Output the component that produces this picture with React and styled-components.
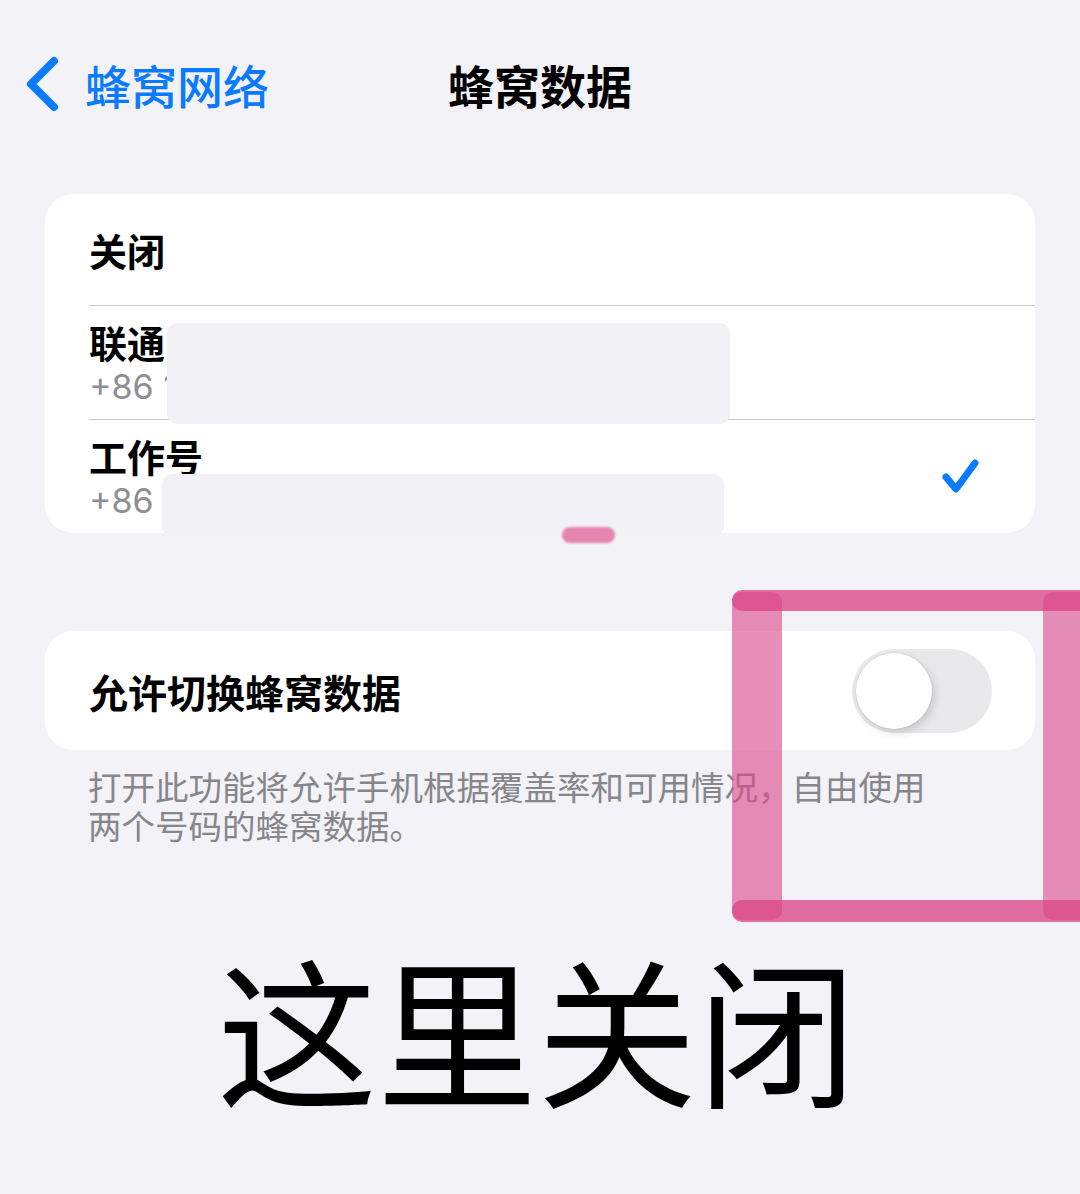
import React from "react";
import styled, { createGlobalStyle } from "styled-components";

const GlobalStyle = createGlobalStyle`
  * { box-sizing: border-box; }
  body {
    margin: 0;
    background: #f2f2f7;
    font-family: "Inter", "Noto Sans CJK SC", sans-serif;
    -webkit-font-smoothing: antialiased;
  }
`;

const Page = styled.div`
  position: relative;
  width: 1080px;
  height: 1194px;
  overflow: hidden;
  background: #f2f2f7;
`;

const NavBar = styled.div`
  display: grid;
  grid-template-columns: 1fr auto 1fr;
  align-items: center;
  height: 168px;
  padding: 0 25px;
`;

const BackButton = styled.div`
  display: flex;
  align-items: center;
  gap: 26px;
  color: #0a7aff;
  font-family: "Noto Sans CJK SC", sans-serif;
  font-size: 46px;
  font-weight: 500;
`;

const Title = styled.div`
  font-family: "Noto Sans CJK SC", sans-serif;
  font-size: 46px;
  font-weight: 700;
  color: #000;
`;

const Card = styled.div`
  position: relative;
  margin: ${(p) => p.$top || 0}px 45px 0;
  background: #fff;
  border-radius: 28px;
`;

const Row = styled.div`
  display: flex;
  padding-left: 44px;
`;

const RowInner = styled.div`
  flex: 1;
  display: flex;
  align-items: center;
  justify-content: space-between;
  min-height: ${(p) => p.$h || 112}px;
  padding-right: ${(p) => p.$pr || 55}px;
  border-bottom: ${(p) => (p.$sep ? "1.5px solid #c8c8cc" : "none")};
`;

const Label = styled.div`
  display: flex;
  flex-direction: column;
  gap: 4px;
  padding-top: 2px;
`;

const RowTitle = styled.div`
  font-family: "Noto Sans CJK SC", sans-serif;
  font-size: ${(p) => p.$size || 38}px;
  font-weight: 600;
  line-height: 42px;
  color: #000;
`;

const RowSub = styled.div`
  font-family: "Inter", "Noto Sans CJK SC", sans-serif;
  font-size: 34px;
  line-height: 40px;
  color: #8e8e93;
`;

const Mask = styled.div`
  position: absolute;
  left: ${(p) => p.$x}px;
  top: ${(p) => p.$y}px;
  width: ${(p) => p.$w}px;
  height: ${(p) => p.$h}px;
  background: #f1f1f6;
  border-radius: 10px;
`;

const Smudge = styled.div`
  position: absolute;
  left: 517px;
  top: 333px;
  width: 53px;
  height: 16px;
  border-radius: 8px;
  background: rgba(224, 96, 148, 0.75);
  filter: blur(1px);
`;

const Toggle = styled.div`
  position: relative;
  width: 140px;
  height: 84px;
  border-radius: 42px;
  background: #e9e9eb;
`;

const Knob = styled.div`
  position: absolute;
  left: 4px;
  top: 4px;
  width: 76px;
  height: 76px;
  border-radius: 50%;
  background: #fff;
  box-shadow: 0 0 0 1px rgba(0, 0, 0, 0.05), 3px 4px 8px rgba(0, 0, 0, 0.14);
`;

const Footnote = styled.p`
  margin: 16px 0 0;
  padding: 0 130px 0 88px;
  font-family: "Noto Sans CJK SC", sans-serif;
  font-size: 33.5px;
  line-height: 39px;
  color: #86868b;
`;

const BigText = styled.div`
  margin-top: 92px;
  text-align: center;
  font-family: "Noto Sans CJK SC", sans-serif;
  font-size: 160px;
  font-weight: 400;
  line-height: 180px;
  color: #000;
  padding-right: 6px;
`;

// hand-drawn marker frame around the toggle
const MarkerLayer = styled.svg`
  position: absolute;
  left: 726px;
  top: 584px;
  filter: blur(0.7px);
  pointer-events: none;
`;

const Chevron = () => (
  <svg width="34" height="56" viewBox="0 0 34 56">
    <path
      d="M29 5 L6 28 L29 51"
      fill="none"
      stroke="#0a7aff"
      strokeWidth="8"
      strokeLinecap="round"
      strokeLinejoin="round"
    />
  </svg>
);

const Check = () => (
  <svg width="38" height="38" viewBox="0 0 38 38">
    <path
      d="M4 19 L14 31 L33 5"
      fill="none"
      stroke="#0a7aff"
      strokeWidth="7"
      strokeLinecap="round"
      strokeLinejoin="round"
    />
  </svg>
);

const Marker = () => (
  <MarkerLayer width="360" height="345" viewBox="0 0 360 345">
    <g fill="#dc4a8a">
      <rect x="6" y="8" width="50" height="328" rx="10" fillOpacity="0.62" />
      <rect x="317" y="8" width="50" height="328" rx="10" fillOpacity="0.6" />
      <rect x="6" y="6" width="360" height="21" rx="10" fillOpacity="0.8" />
      <rect x="6" y="316" width="360" height="22" rx="10" fillOpacity="0.8" />
    </g>
  </MarkerLayer>
);

export default function App() {
  return (
    <Page>
      <GlobalStyle />
      <NavBar>
        <BackButton>
          <Chevron />
          蜂窝网络
        </BackButton>
        <Title>蜂窝数据</Title>
        <div />
      </NavBar>

      <Card $top={26}>
        <Row>
          <RowInner $sep $h={112}>
            <RowTitle>关闭</RowTitle>
          </RowInner>
        </Row>
        <Row>
          <RowInner $sep $h={114}>
            <Label>
              <RowTitle>联通</RowTitle>
              <RowSub>+86 1</RowSub>
            </Label>
          </RowInner>
        </Row>
        <Row>
          <RowInner $h={113}>
            <Label>
              <RowTitle>工作号</RowTitle>
              <RowSub>+86</RowSub>
            </Label>
            <Check />
          </RowInner>
        </Row>
        <Mask $x={122} $y={129} $w={563} $h={101} />
        <Mask $x={117} $y={280} $w={562} $h={62} />
        <Smudge />
      </Card>

      <Card $top={98}>
        <Row>
          <RowInner $h={119} $pr={43}>
            <RowTitle $size={39}>允许切换蜂窝数据</RowTitle>
            <Toggle>
              <Knob />
            </Toggle>
          </RowInner>
        </Row>
      </Card>

      <Footnote>
        打开此功能将允许手机根据覆盖率和可用情况，自由使用两个号码的蜂窝数据。
      </Footnote>

      <BigText>这里关闭</BigText>

      <Marker />
    </Page>
  );
}
